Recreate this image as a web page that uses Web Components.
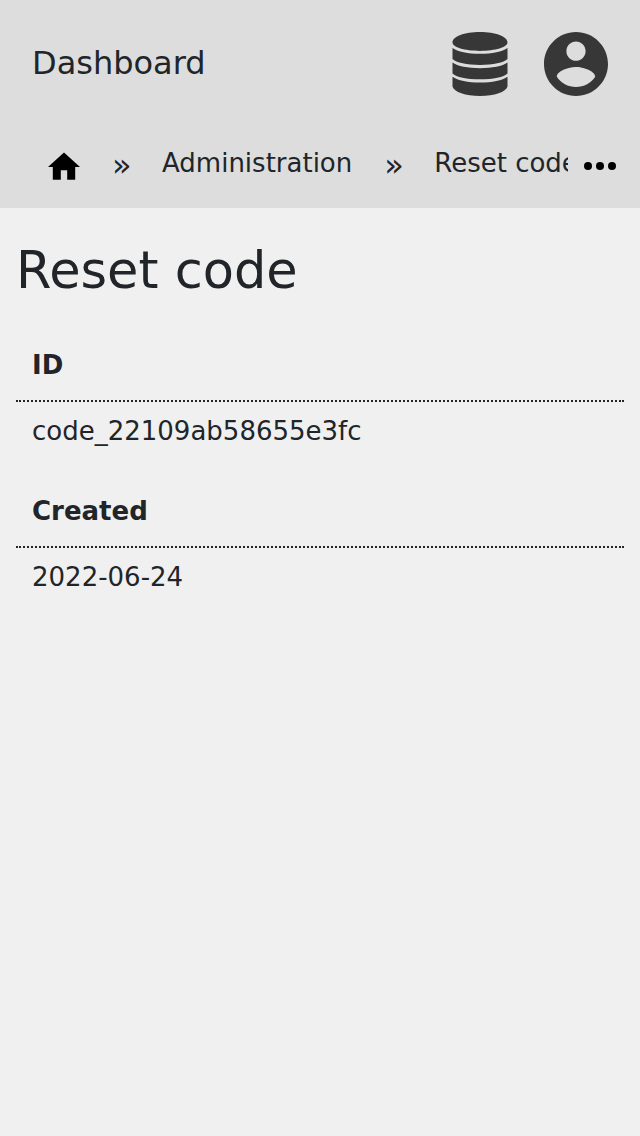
<!DOCTYPE html>
<html lang="en">
<head>
<meta charset="utf-8">
<title>Reset code</title>
<style>
body{margin:0;background:#f0f0f0;color:#212529;font-family:"DejaVu Sans",sans-serif;font-size:26px;line-height:40px}
</style>
</head>
<body>
<app-header>Dashboard</app-header>
<bread-crumbs></bread-crumbs>
<detail-page heading="Reset code">
<detail-field label="ID">code_22109ab58655e3fc</detail-field>
<detail-field label="Created">2022-06-24</detail-field>
</detail-page>
<script>
const define = (name, html) => customElements.define(name, class extends HTMLElement {
  connectedCallback() {
    if (this.shadowRoot) return;
    const root = this.attachShadow({ mode: "open" });
    root.innerHTML = html;
    root.querySelectorAll("[data-attr]").forEach(el => { el.textContent = this.getAttribute(el.dataset.attr); });
  }
});

define("app-header", `<style>
:host{display:block;background:#ddd}
header{display:flex;align-items:flex-start;padding:32px;gap:32px}
a{color:inherit;text-decoration:none;font-size:32px;line-height:62px;flex:1}
button{border:0;padding:0;background:none;color:#373737;width:64px;height:64px}
svg{display:block;width:64px;height:64px;fill:currentColor}
</style>
<header><a href="#"><slot></slot></a>
<button aria-label="Administration"><svg viewBox="0 0 640 640"><path d="M45 105C45 45 165 0 320 0s275 45 275 105C595 150 475 189 320 189S45 150 45 105zM45 160C95 198 200 218 320 218s225-20 275-58V270C560 306 450 329 320 329S80 306 45 270zM45 306C95 344 200 362 320 362s225-18 275-56V414C560 450 450 472 320 472S80 450 45 414zM45 448C95 486 200 506 320 506s225-20 275-58V545C580 600 465 640 320 640S60 600 45 545z"/></svg></button>
<button aria-label="Account"><svg viewBox="2 2 20 20"><path d="M12 2C6.480 2 2 6.480 2 12s4.480 10 10 10 10-4.480 10-10S17.520 2 12 2zm0 3c1.660 0 3 1.340 3 3s-1.340 3-3 3-3-1.340-3-3 1.340-3 3-3zm0 14.200c-2.500 0-4.710-1.280-6-3.220.030-1.990 4-3.080 6-3.080 1.990 0 5.970 1.090 6 3.080-1.290 1.940-3.500 3.220-6 3.220z"/></svg></button>
</header>`);

define("bread-crumbs", `<style>
:host{display:block;background:#ddd}
nav{display:flex;padding:0 24px 10px 0}
ol{display:flex;flex:1;min-width:0;overflow:hidden;margin:0;padding:15px 0 0 48px;list-style:none;white-space:nowrap}
li{display:flex;flex:none;height:55px}
li+li::before{content:"»";font-size:32px;width:16px;margin:0 34px 0 32px;line-height:44px}
a{color:inherit;text-decoration:none}
svg{display:block;fill:#000}
.home{width:32px;height:32px;margin-top:8px}
button{border:0;background:none;padding:0;margin:22px 0 0 16px;width:32px;height:32px}
</style>
<nav aria-label="Breadcrumb"><ol>
<li><a href="#" aria-label="Home"><svg class="home" viewBox="2 2 20 20"><path d="M10 20v-6h4v6h5v-8h3L12 3 2 12h3v8z"/></svg></a></li>
<li><a href="#">Administration</a></li><li><a href="#">Reset code</a></li></ol>
<button aria-label="More"><svg width="32" height="32" viewBox="0 0 32 32"><circle cx="4" cy="16" r="4"/><circle cx="16" cy="16" r="4"/><circle cx="28" cy="16" r="4"/></svg></button></nav>`);

define("detail-page", `<style>
:host{display:block;padding:32px 16px}
h1{margin:0 0 32px;font-size:51px;line-height:62px;font-weight:400}
section{display:grid;gap:16px}
</style>
<main><h1 data-attr="heading"></h1><section><slot></slot></section></main>`);

define("detail-field", `<style>
:host{display:block}
table{width:100%;border-collapse:collapse}
th,td{display:block;text-align:left}
th{padding:11px 16px 15px;border-bottom:2px dotted #212529}
td{padding:9px 16px 13px}
</style>
<table><tbody><tr><th scope="row" data-attr="label"></th><td><slot></slot></td></tr></tbody></table>`);
</script>
</body>
</html>
